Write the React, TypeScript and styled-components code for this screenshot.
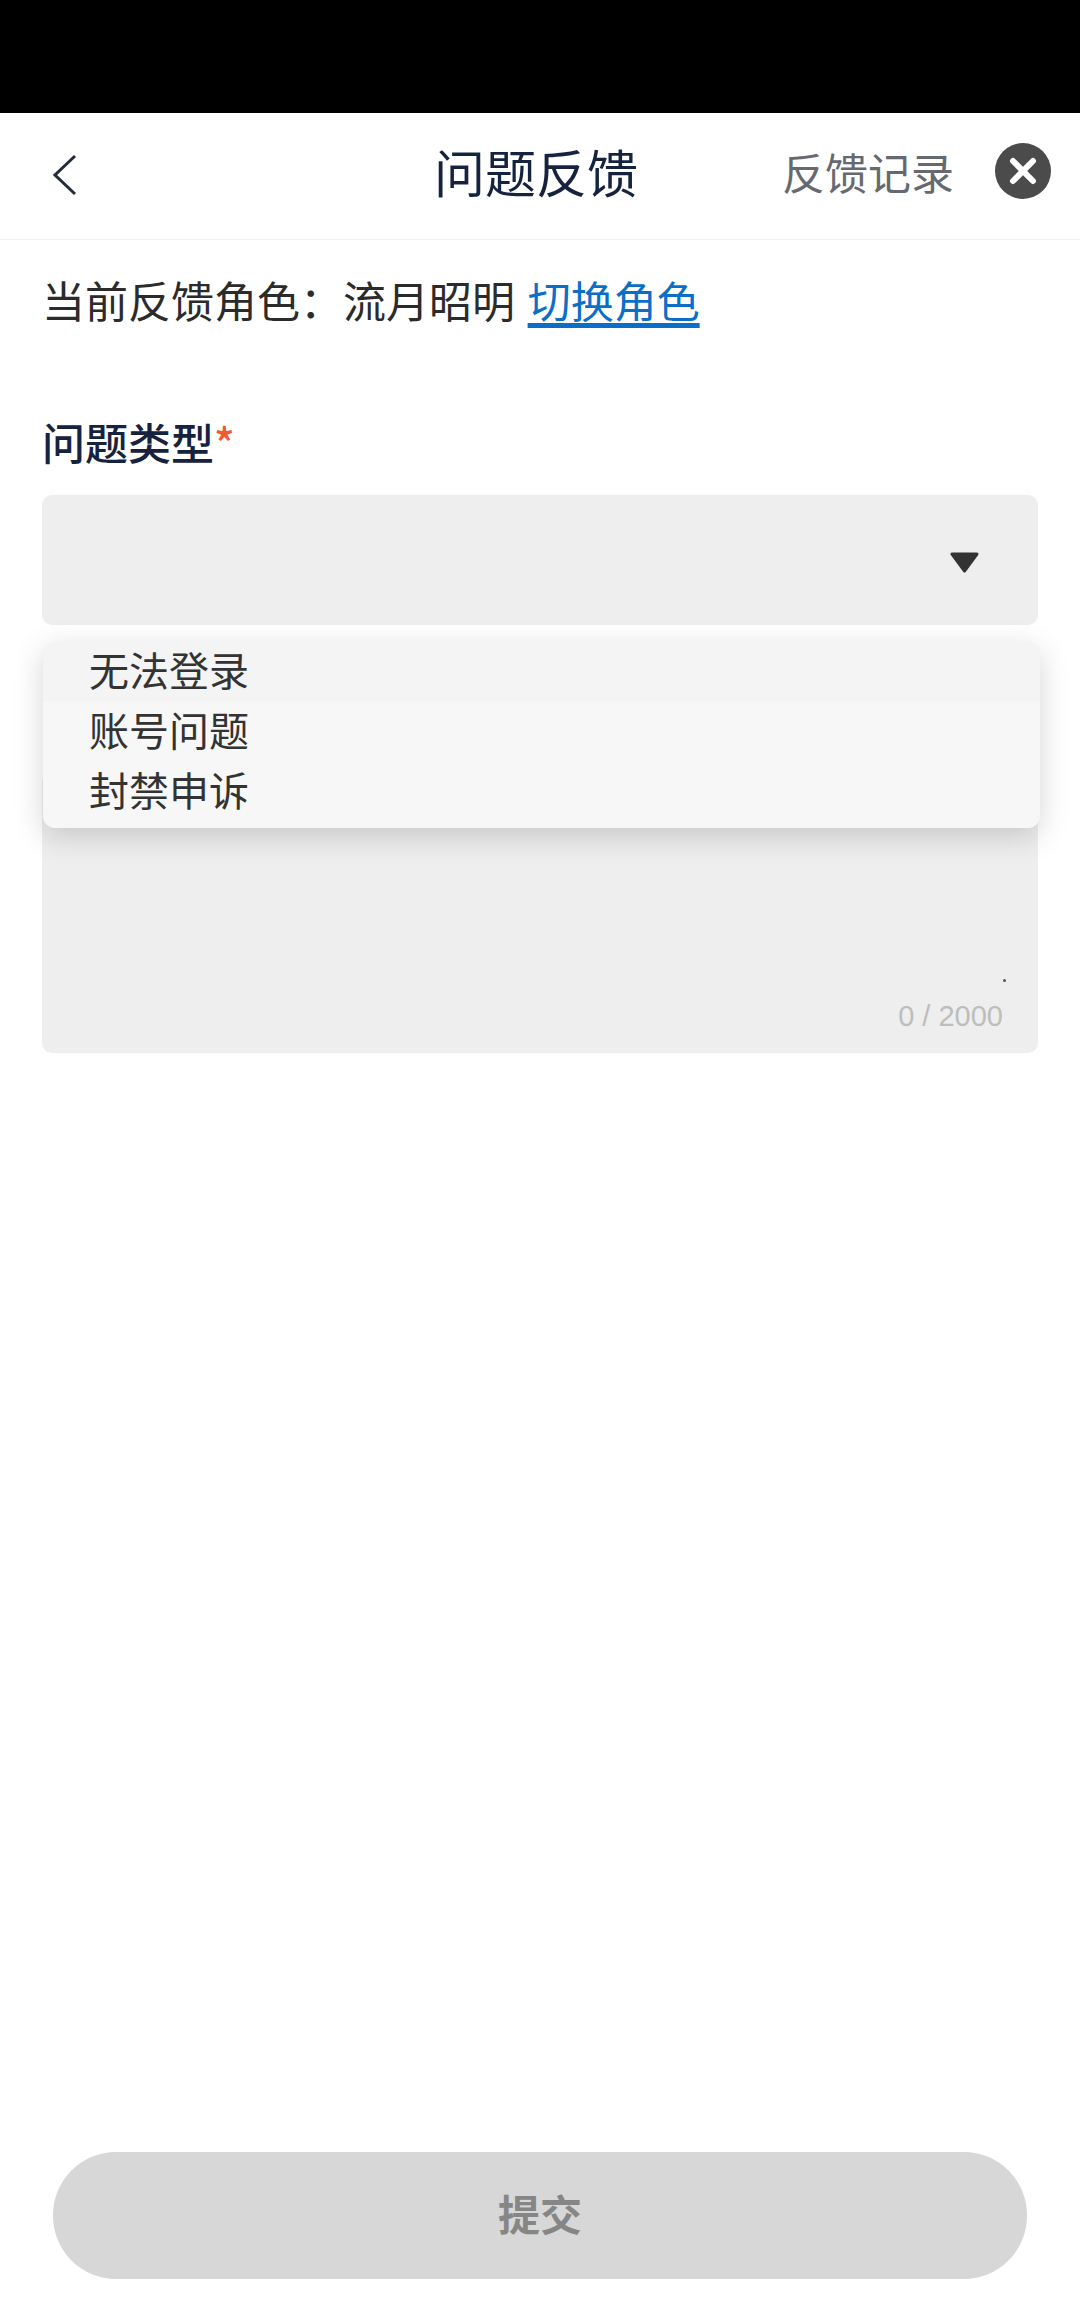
import styled, { createGlobalStyle } from "styled-components";

const GlobalStyle = createGlobalStyle`
  html, body {
    margin: 0;
    padding: 0;
    background: #fff;
  }
  body {
    font-family: "Noto Sans CJK SC", "Noto Sans", sans-serif;
  }
`;

const Page = styled.div`
  width: 1080px;
  height: 2324px;
  display: flex;
  flex-direction: column;
  overflow: hidden;
  background: #fff;
`;

const StatusBar = styled.div`
  height: 113px;
  flex-shrink: 0;
  background: #000;
`;

const Header = styled.header`
  box-sizing: border-box;
  height: 127px;
  flex-shrink: 0;
  display: flex;
  align-items: center;
  padding: 0 29px 10px 50px;
  border-bottom: 1px solid #f0f0f0;
`;

const BackButton = styled.div`
  width: 30px;
  height: 46px;
  margin-top: 7px;
  display: flex;
`;

const Title = styled.h1`
  margin: 0 0 0 354px;
  width: 204px;
  font-size: 51px;
  line-height: 60px;
  font-weight: 400;
  white-space: nowrap;
  color: #16233f;
`;

const RecordLink = styled.span`
  margin-left: 144px;
  font-size: 43px;
  line-height: 60px;
  color: #666a70;
  white-space: nowrap;
`;

const CloseButton = styled.div`
  margin-left: auto;
  width: 56px;
  height: 56px;
  display: flex;
`;

const Content = styled.main`
  flex: 1;
  display: flex;
  flex-direction: column;
  padding: 0 42px;
`;

const RoleLine = styled.div`
  margin-top: 29px;
  font-size: 43px;
  line-height: 60px;
  color: #2b2b2b;
  white-space: nowrap;
`;

const SwitchLink = styled.a`
  margin-left: 3px;
  color: #0b6fc9;
  text-decoration: underline;
  text-decoration-thickness: 5px;
  text-underline-offset: 5px;
`;

const FieldLabel = styled.div`
  margin-top: 82px;
  font-size: 43px;
  line-height: 60px;
  font-weight: 500;
  color: #16233f;
  white-space: nowrap;
`;

const Required = styled.span`
  color: #ef5b32;
`;

const SelectWrap = styled.div`
  position: relative;
  z-index: 2;
  margin-top: 24px;
`;

const SelectBox = styled.div`
  height: 130px;
  display: flex;
  align-items: center;
  justify-content: flex-end;
  padding: 0 59px 0 0;
  background: #eeeeee;
  border-radius: 10px;
`;

const Caret = styled.div`
  width: 29px;
  height: 21px;
  margin-top: 5px;
  display: flex;
`;

const Dropdown = styled.ul`
  position: absolute;
  top: 147px;
  left: 1px;
  width: 997px;
  height: 186px;
  margin: 0;
  padding: 0;
  list-style: none;
  background: #f7f7f7;
  border-radius: 12px;
  box-shadow: 0 8px 30px rgba(0, 0, 0, 0.17);
`;

const Option = styled.li<{ $active?: boolean }>`
  height: 60px;
  padding-left: 46px;
  font-size: 40px;
  line-height: 54px;
  color: #333;
  white-space: nowrap;
  border-radius: 12px 12px 0 0;
  background: ${(props) => (props.$active ? "#f4f4f4" : "transparent")};
`;

const TextArea = styled.div`
  position: relative;
  margin-top: 146px;
  height: 282px;
  background: #eeeeee;
  border-radius: 10px;
`;

const ResizeDot = styled.span`
  position: absolute;
  right: 32px;
  bottom: 71px;
  width: 3px;
  height: 3px;
  border-radius: 50%;
  background: #555;
`;

const Counter = styled.span`
  position: absolute;
  right: 35px;
  bottom: 19px;
  font-family: "Liberation Sans", sans-serif;
  font-size: 29px;
  line-height: 36px;
  color: #bdbdbd;
`;

const Footer = styled.div`
  margin-top: auto;
  padding: 0 53px 45px;
  flex-shrink: 0;
`;

const SubmitButton = styled.div`
  box-sizing: border-box;
  height: 127px;
  padding-bottom: 6px;
  display: flex;
  align-items: center;
  justify-content: center;
  border-radius: 63px;
  background: #d7d7d7;
  color: #868686;
  font-size: 42px;
  font-weight: 700;
`;

const options = ["无法登录", "账号问题", "封禁申诉"];

export default function App() {
  return (
    <Page>
      <GlobalStyle />
      <StatusBar />
      <Header>
        <BackButton>
          <svg width="30" height="46" viewBox="0 0 30 46" fill="none">
            <path d="M25 4 L5 23 L25 42" stroke="#222b3a" strokeWidth="3" />
          </svg>
        </BackButton>
        <Title>问题反馈</Title>
        <RecordLink>反馈记录</RecordLink>
        <CloseButton>
          <svg width="56" height="56" viewBox="0 0 56 56">
            <circle cx="28" cy="28" r="28" fill="#4b4b4b" />
            <path
              d="M18 18 L38 38 M38 18 L18 38"
              stroke="#fff"
              strokeWidth="6"
              strokeLinecap="round"
            />
          </svg>
        </CloseButton>
      </Header>
      <Content>
        <RoleLine>
          当前反馈角色：流月昭明 <SwitchLink>切换角色</SwitchLink>
        </RoleLine>
        <FieldLabel>
          问题类型<Required>*</Required>
        </FieldLabel>
        <SelectWrap>
          <SelectBox>
            <Caret>
              <svg width="29" height="21" viewBox="0 0 29 21">
                <path d="M2 2 H27 L14.5 19 Z" fill="#333" stroke="#333" strokeLinejoin="round" strokeWidth="3" />
              </svg>
            </Caret>
          </SelectBox>
          <Dropdown>
            {options.map((item, i) => (
              <Option key={item} $active={i === 0}>
                {item}
              </Option>
            ))}
          </Dropdown>
        </SelectWrap>
        <TextArea>
          <ResizeDot />
          <Counter>0 / 2000</Counter>
        </TextArea>
      </Content>
      <Footer>
        <SubmitButton>提交</SubmitButton>
      </Footer>
    </Page>
  );
}
